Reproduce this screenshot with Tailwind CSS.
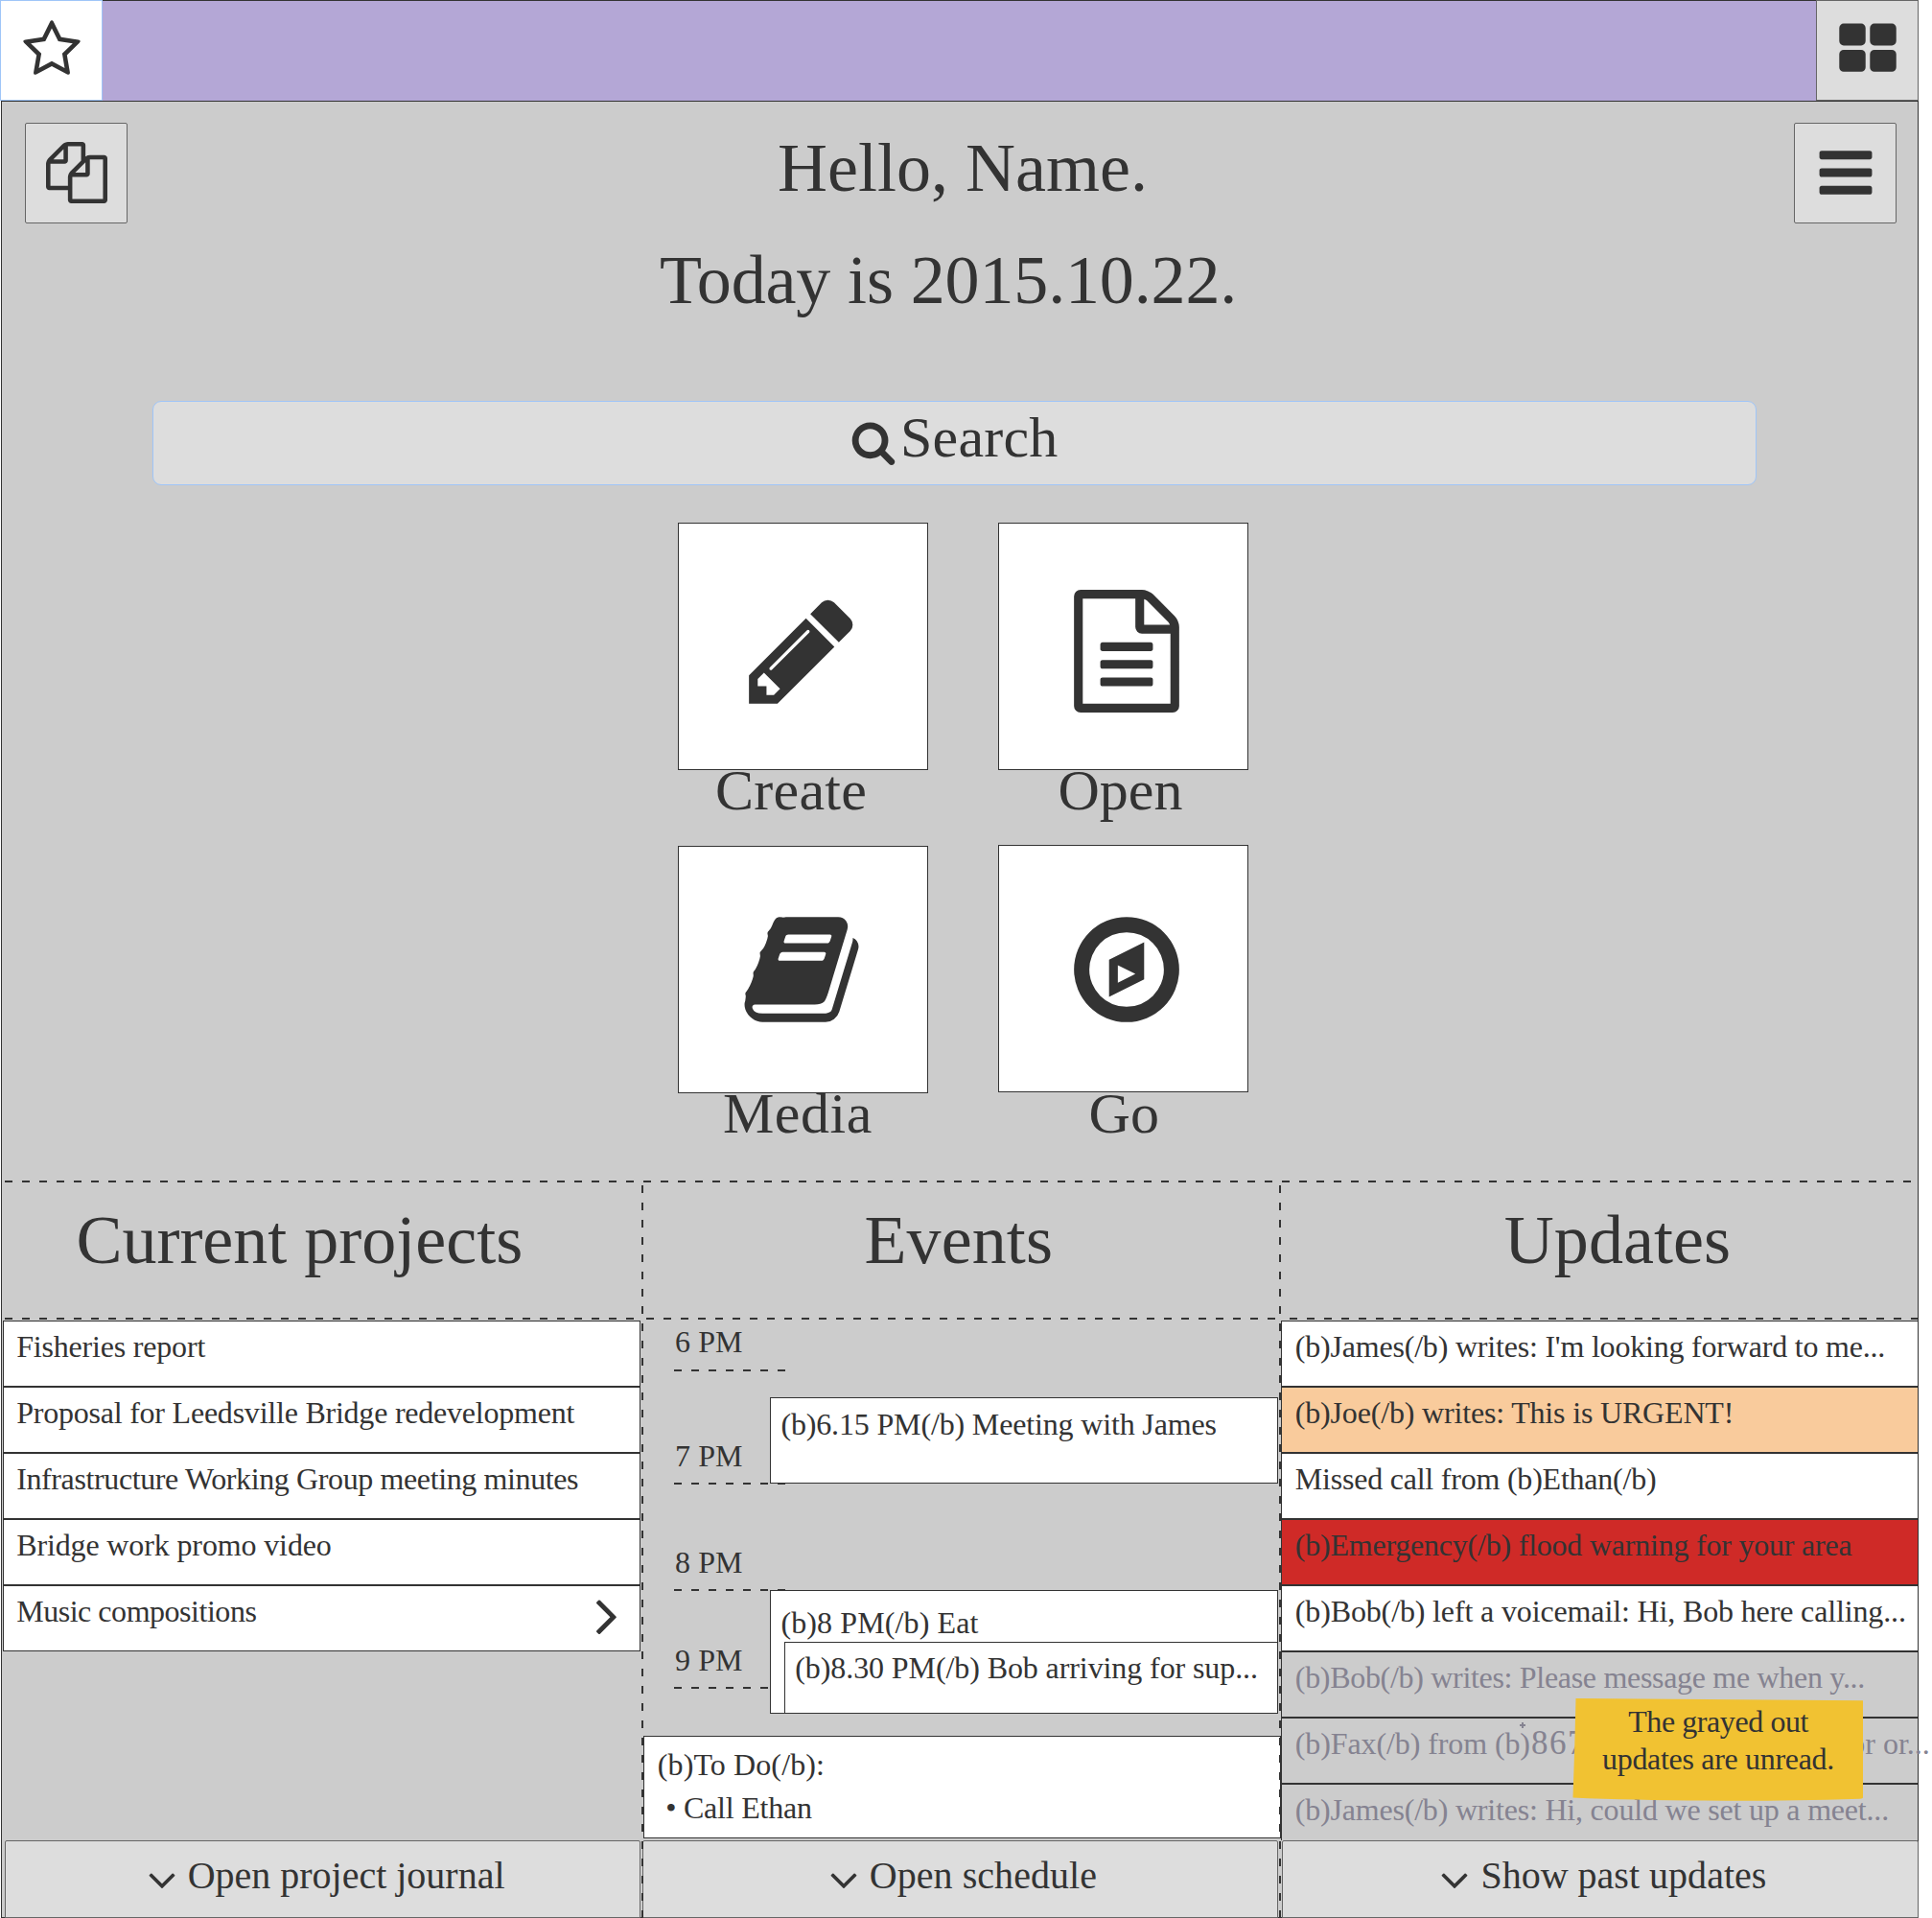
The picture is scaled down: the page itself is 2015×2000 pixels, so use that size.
<!DOCTYPE html>
<html lang="en">
<head>
<meta charset="utf-8">
<title>Home</title>
<script src="https://cdn.jsdelivr.net/npm/@tailwindcss/browser@4"></script>
</head>
<body class="w-[2015px] h-[2000px] overflow-hidden bg-white text-[#333333] font-['Liberation_Serif',serif] text-[32px] leading-[40px] whitespace-nowrap">

<!-- icon sprites -->
<svg class="hidden">
  <symbol id="angle-down" viewBox="0 0 1792 1792"><path d="M1395 736q0 13-10 23l-466 466q-10 10-23 10t-23-10l-466-466q-10-10-10-23t10-23l50-50q10-10 23-10t23 10l393 393 393-393q10-10 23-10t23 10l50 50q10 10 10 23z"/></symbol>
</svg>

<header class="flex w-[2001px] h-[105px]">
  <button class="flex w-[107px] h-[105px] border border-[#9fc5f8] bg-white">
    <svg class="ml-[21px] mt-[19.3px] size-16 shrink-0 fill-[#333333]" viewBox="0 0 1792 1792"><path d="M1201 1004l306-297-422-62-189-382-189 382-422 62 306 297-73 421 378-199 377 199zm527-357q0 22-26 48l-363 354 86 500q1 7 1 20 0 50-41 50-19 0-40-12l-449-236-449 236q-22 12-40 12-21 0-31.5-14.5t-10.5-35.5q0-6 2-20l86-500-364-354q-25-27-25-48 0-37 56-46l502-73 225-455q19-41 49-41t49 41l225 455 502 73q56 9 56 46z"/></svg>
  </button>
  <div class="flex-1 border-t border-[#333333] bg-[#b4a7d6]"></div>
  <button class="flex w-[107px] h-[105px] border border-[#666666] bg-[#dddddd]">
    <svg class="ml-[21px] mt-[19px] size-16 shrink-0 fill-[#333333]" viewBox="0 0 1792 1792"><path d="M832 1024v384q0 52-38 90t-90 38h-512q-52 0-90-38t-38-90v-384q0-52 38-90t90-38h512q52 0 90 38t38 90zm0-768v384q0 52-38 90t-90 38h-512q-52 0-90-38t-38-90v-384q0-52 38-90t90-38h512q52 0 90 38t38 90zm896 768v384q0 52-38 90t-90 38h-512q-52 0-90-38t-38-90v-384q0-52 38-90t90-38h512q52 0 90 38t38 90zm0-768v384q0 52-38 90t-90 38h-512q-52 0-90-38t-38-90v-384q0-52 38-90t90-38h512q52 0 90 38t38 90z"/></svg>
  </button>
</header>

<main class="ml-px w-[2000px] h-[1895px] border border-[#333333] bg-[#cccccc]">

  <!-- greeting -->
  <section class="flex h-[312px] pt-[22px] pl-[24px] pr-[22px] text-[72px] leading-[80px]">
    <button class="flex w-[107px] h-[105px] rounded-[2px] border border-[#666666] bg-[#dddddd]">
      <svg class="ml-[21px] mt-[19px] size-16 shrink-0 fill-[#333333]" viewBox="0 0 1792 1792"><path d="M1696 384q40 0 68 28t28 68v1216q0 40-28 68t-68 28h-960q-40 0-68-28t-28-68v-288h-544q-40 0-68-28t-28-68v-672q0-40 20-88t48-76l408-408q28-28 76-48t88-20h416q40 0 68 28t28 68v328q68-40 128-40h416zm-544 213l-299 299h299v-299zm-640-384l-299 299h299v-299zm196 647l316-316v-416h-384v416q0 40-28 68t-68 28h-416v640h512v-256q0-40 20-88t48-76zm956 804v-1152h-384v416q0 40-28 68t-68 28h-416v640h896z"/></svg>
    </button>
    <div class="flex-1 pt-[7px]">
      <h1 class="pl-[678px]">Hello, Name.</h1>
      <p class="mt-[37px] pl-[555px] tracking-[-0.139px]">Today is 2015.10.22.</p>
    </div>
    <button class="flex w-[107px] h-[105px] rounded-[2px] border border-[#666666] bg-[#dddddd]">
      <svg class="ml-[21px] mt-[19px] size-16 shrink-0 fill-[#333333]" viewBox="0 0 1792 1792"><path d="M1664 1344v128q0 26-19 45t-45 19h-1408q-26 0-45-19t-19-45v-128q0-26 19-45t45-19h1408q26 0 45 19t19 45zm0-512v128q0 26-19 45t-45 19h-1408q-26 0-45-19t-19-45v-128q0-26 19-45t45-19h1408q26 0 45 19t19 45zm0-512v128q0 26-19 45t-45 19h-1408q-26 0-45-19t-19-45v-128q0-26 19-45t45-19h1408q26 0 45 19t19 45z"/></svg>
    </button>
  </section>

  <!-- search -->
  <div class="ml-[157px] flex w-[1673px] h-[88px] rounded-[9px] border border-[#9fc5f8] bg-[#dddddd] text-[60px] leading-[60px]">
    <svg class="ml-[727px] mt-[18.3px] size-12 shrink-0 fill-[#333333]" viewBox="0 0 1792 1792"><path d="M1216 832q0-185-131.5-316.5t-316.5-131.5-316.5 131.5-131.5 316.5 131.5 316.5 316.5 131.5 316.5-131.5 131.5-316.5zm512 832q0 52-38 90t-90 38q-54 0-90-38l-343-342q-179 124-399 124-143 0-273.5-55.5t-225-150-150-225-55.5-273.5 55.5-273.5 150-225 225-150 273.5-55.5 273.5 55.5 225 150 150 225 55.5 273.5q0 220-124 399l343 343q37 37 37 90z"/></svg>
    <span class="ml-[4px] mt-[7px] tracking-[0.2px]">Search</span>
  </div>

  <!-- launch tiles -->
  <section class="mt-[39px] flex h-[686px] gap-[73px] pl-[705px] text-[60px] leading-[40px]">
    <div class="w-[261px]">
      <div class="flex h-[258px] border border-[#333333] bg-white">
        <svg class="ml-[63.5px] mt-[69px] size-32 shrink-0 fill-[#333333]" viewBox="0 0 1792 1792"><path d="M491 1536l91-91-235-235-91 91v107h128v128h107zm523-928q0-22-22-22-10 0-17 7l-542 542q-7 7-7 17 0 22 22 22 10 0 17-7l542-542q7-7 7-17zm-54-192l416 416-832 832h-416v-416zm683 96q0 53-37 90l-166 166-416-416 166-165q36-38 90-38 53 0 91 38l235 234q37 39 37 91z"/></svg>
      </div>
      <p class="h-10 pt-px pl-[39px] tracking-[0.25px]">Create</p>
      <div class="mt-[39px] flex h-[258px] border border-[#333333] bg-white">
        <svg class="ml-[64px] mt-[64px] size-32 shrink-0 fill-[#333333]" viewBox="0 0 1792 1792"><path d="M1703 478q40 57 18 129l-275 906q-19 64-76.500 107.500t-122.500 43.500h-923q-77 0-148.500-53.500t-99.500-131.500q-24-67-2-127 0-4 3-27t4-37q1-8-3-21.500t-3-19.500q2-11 8-21t16.500-23.500 16.500-23.500q23-38 45-91.500t30-91.500q3-10 .5-30t-.5-28q3-11 17-28t17-23q21-36 42-92t25-90q1-9-2.500-32t.5-28q4-13 22-30.500t22-22.500q19-26 42.500-84.500t27.500-96.500q1-8-3-25.500t-2-26.500q2-8 9-18t18-23 17-21q8-12 16.500-30.500t15-35 16-36 19.500-32 26.500-23.500 36-11.500 47.500 5.500l-1 3q38-9 51-9h761q74 0 114 56t18 130l-274 906q-36 119-71.500 153.500t-128.500 34.500h-869q-27 0-38 15-11 16-1 43 24 70 144 70h923q29 0 56-15.500t35-41.500l300-987q7-22 5-57 38 15 59 43zm-1064 2q-4 13 2 22.500t20 9.500h608q13 0 25.500-9.500t16.500-22.500l21-64q4-13-2-22.500t-20-9.500h-608q-13 0-25.500 9.500t-16.500 22.500zm-83 256q-4 13 2 22.500t20 9.500h608q13 0 25.500-9.500t16.500-22.500l21-64q4-13-2-22.500t-20-9.500h-608q-13 0-25.500 9.500t-16.500 22.500z"/></svg>
      </div>
      <p class="h-10 pt-px pl-[47px] tracking-[0.5px]">Media</p>
    </div>
    <div class="w-[261px]">
      <div class="flex h-[258px] border border-[#333333] bg-white">
        <svg class="ml-[68.700px] mt-[69px] size-32 shrink-0 fill-[#333333]" viewBox="0 0 1792 1792"><path d="M1596 380q28 28 48 76t20 88v1152q0 40-28 68t-68 28h-1344q-40 0-68-28t-28-68v-1600q0-40 28-68t68-28h896q40 0 88 20t76 48zm-444-244v376h376q-10-29-22-41l-313-313q-12-12-41-22zm384 1528v-1024h-416q-40 0-68-28t-28-68v-416h-768v1536h1280zm-1024-864q0-14 9-23t23-9h704q14 0 23 9t9 23v64q0 14-9 23t-23 9h-704q-14 0-23-9t-9-23v-64zm736 224q14 0 23 9t9 23v64q0 14-9 23t-23 9h-704q-14 0-23-9t-9-23v-64q0-14 9-23t23-9h704zm0 256q14 0 23 9t9 23v64q0 14-9 23t-23 9h-704q-14 0-23-9t-9-23v-64q0-14 9-23t23-9h704z"/></svg>
      </div>
      <p class="h-10 pt-px pl-[62.500px]">Open</p>
      <div class="mt-[38px] flex h-[258px] border border-[#333333] bg-white">
        <svg class="ml-[68.700px] mt-[65px] size-32 shrink-0 fill-[#333333]" viewBox="0 0 1792 1792" fill-rule="evenodd"><path d="M896 128a768 768 0 1 1 0 1536a768 768 0 1 1 0-1536zM896 352a544 544 0 1 0 0 1088a544 544 0 1 0 0-1088z"/><path d="M640 752L1152 496V1040L640 1296zM768 832V1088L1024 960z"/></svg>
      </div>
      <p class="h-10 pt-[2px] pl-[94.500px] tracking-[0.17px]">Go</p>
    </div>
  </section>

  <!-- dashboard -->
  <div class="ml-[3px] w-[1988px] h-[2px] bg-[repeating-linear-gradient(90deg,#333333_0_8px,transparent_8px_18px)]"></div>
  <section class="flex h-[767px]">

    <!-- current projects -->
    <div class="w-[667px] shrink-0">
      <h2 class="h-[141px] pt-[20px] pl-[77.400px] text-[72px] leading-[80px]">Current projects</h2>
      <div class="ml-[3px] w-[656px] h-[2px] bg-[repeating-linear-gradient(90deg,#333333_0_8px,transparent_8px_18px)]"></div>
      <ul class="mt-px ml-px h-[542px] w-[665px]">
        <li class="h-[69px] border border-[#333333] bg-white pt-[6px] pl-[13.200px] tracking-[-0.19px]">Fisheries report</li>
        <li class="h-[69px] border border-[#333333] bg-white pt-[6px] pl-[13.200px] tracking-[-0.225px]">Proposal for Leedsville Bridge redevelopment</li>
        <li class="h-[69px] border border-[#333333] bg-white pt-[6px] pl-[13.200px] tracking-[-0.385px]">Infrastructure Working Group meeting minutes</li>
        <li class="h-[69px] border border-[#333333] bg-white pt-[6px] pl-[13.200px] tracking-[-0.13px]">Bridge work promo video</li>
        <li class="flex h-[69px] justify-between border border-[#333333] bg-white pt-[6px] pl-[13.200px] tracking-[-0.47px]">Music compositions
          <svg class="-mt-[8px] mr-[2px] size-16 fill-[#333333]" viewBox="0 0 1792 1792"><path d="M1171 960q0 13-10 23l-466 466q-10 10-23 10t-23-10l-50-50q-10-10-10-23t10-23l393-393-393-393q-10-10-10-23t10-23l50-50q10-10 23-10t23 10l466 466q10 10 10 23z"/></svg>
        </li>
      </ul>
      <button class="ml-[3px] flex h-[81px] w-[663px] rounded-t-[2px] border border-[#666666] bg-[#dddddd] text-[40px] leading-[80px]">
        <svg class="ml-[139px] mt-[16px] size-12 fill-[#333333]"><use href="#angle-down"/></svg>
        <span class="-mt-[4px] ml-[2.700px] tracking-[-0.01px]">Open project journal</span>
      </button>
    </div>

    <div class="relative z-10 mt-[3px] h-[764px] w-[2px] shrink-0 bg-[repeating-linear-gradient(180deg,#333333_0_8px,transparent_8px_18px)]"></div>

    <!-- events -->
    <div class="w-[663px] shrink-0">
      <h2 class="h-[141px] pt-[20px] pl-[230.500px] text-[72px] leading-[80px] tracking-[0.1px]">Events</h2>
      <div class="ml-[3px] w-[656px] h-[2px] bg-[repeating-linear-gradient(90deg,#333333_0_8px,transparent_8px_18px)]"></div>
      <div class="relative h-[434px] pt-[3px] pl-[32px]">
        <div class="flex h-[119px] w-[116px] flex-col"><span class="pl-px tracking-[0.1px]">6 PM</span><i class="mt-[9px] block h-[2px] bg-[repeating-linear-gradient(90deg,#333333_0_8px,transparent_8px_18px)]"></i></div>
        <div class="flex h-[111px] w-[116px] flex-col"><span class="pl-px tracking-[0.1px]">7 PM</span><i class="mt-[8px] block h-[2px] bg-[repeating-linear-gradient(90deg,#333333_0_8px,transparent_8px_18px)]"></i></div>
        <div class="flex h-[102px] w-[116px] flex-col"><span class="pl-px tracking-[0.1px]">8 PM</span><i class="mt-[8px] block h-[2px] bg-[repeating-linear-gradient(90deg,#333333_0_8px,transparent_8px_18px)]"></i></div>
        <div class="flex w-[116px] flex-col"><span class="pl-px tracking-[0.1px]">9 PM</span><i class="mt-[8px] block h-[2px] bg-[repeating-linear-gradient(90deg,#333333_0_8px,transparent_8px_18px)]"></i></div>
        <!-- calendar entries placed by time -->
        <div class="absolute top-[81px] left-[132px] h-[90px] w-[530px] border border-[#333333] bg-white pt-[7px] pl-[10.400px] tracking-[-0.155px]">(b)6.15 PM(/b) Meeting with James</div>
        <div class="absolute top-[282px] left-[132px] h-[129px] w-[530px] border border-[#333333] bg-white pt-[13px] pl-[10.400px] tracking-[0.12px]">(b)8 PM(/b) Eat</div>
        <div class="absolute top-[336px] left-[147px] h-[75px] w-[515px] border border-[#333333] bg-white pt-[6px] pl-[10.300px] tracking-[-0.094px]">(b)8.30 PM(/b) Bob arriving for sup...</div>
      </div>
      <div class="h-[107px] w-[665px] border border-[#333333] bg-white pt-[9px] pl-[13.800px]">
        <p class="h-[45px] tracking-[0.105px]">(b)To Do(/b):</p>
        <p class="pl-[8.400px] tracking-[-0.216px]">• Call Ethan</p>
      </div>
      <button class="mt-[2px] -ml-px flex h-[81px] w-[663px] rounded-t-[2px] border border-[#666666] bg-[#dddddd] text-[40px] leading-[80px]">
        <svg class="ml-[185.200px] mt-[16px] size-12 fill-[#333333]"><use href="#angle-down"/></svg>
        <span class="-mt-[4px] ml-[2.500px] tracking-[0.06px]">Open schedule</span>
      </button>
    </div>

    <div class="relative z-10 mt-[3px] h-[764px] w-[2px] shrink-0 bg-[repeating-linear-gradient(180deg,#333333_0_8px,transparent_8px_18px)]"></div>

    <!-- updates -->
    <div class="relative w-[665px] shrink-0">
      <h2 class="h-[141px] pt-[20px] pl-[232.800px] text-[72px] leading-[80px] tracking-[0.06px]">Updates</h2>
      <div class="ml-[9px] w-[656px] h-[2px] bg-[repeating-linear-gradient(90deg,#333333_0_8px,transparent_8px_18px)]"></div>
      <ul class="mt-px h-[542px]">
        <li class="h-[69px] border border-[#333333] bg-white pt-[6px] pl-[13.800px] tracking-[-0.2px]">(b)James(/b) writes: I'm looking forward to me...</li>
        <li class="h-[69px] border border-[#333333] bg-[#f9cb9c] pt-[6px] pl-[13.800px] tracking-[-0.175px]">(b)Joe(/b) writes: This is URGENT!</li>
        <li class="h-[69px] border border-[#333333] bg-white pt-[6px] pl-[13.800px] tracking-[-0.219px]">Missed call from (b)Ethan(/b)</li>
        <li class="h-[69px] border border-[#333333] bg-[#cf2a27] pt-[6px] pl-[13.800px] tracking-[-0.22px]">(b)Emergency(/b) flood warning for your area</li>
        <li class="h-[69px] border border-[#333333] bg-white pt-[6px] pl-[13.800px] tracking-[-0.14px]">(b)Bob(/b) left a voicemail: Hi, Bob here calling...</li>
        <li class="h-[69px] border border-[#333333] pt-[6px] pl-[13.800px] tracking-[-0.31px] text-[#858391]">(b)Bob(/b) writes: Please message me when y...</li>
        <li class="h-[69px] border border-[#333333] pt-[6px] pl-[13.800px] text-[#858391]">
          <div class="flex w-[662px]">
            <span class="tracking-[-0.1px]">(b)Fax(/b) from (b)</span>
            <span class="ml-px text-[35px] tracking-[1.5px]">867</span>
            <span class="ml-auto">for or...</span>
          </div>
        </li>
        <li class="h-[59px] border border-b-0 border-[#333333] pt-[6px] pl-[13.800px] tracking-[-0.2px] text-[#858391]">(b)James(/b) writes: Hi, could we set up a meet...</li>
      </ul>
      <button class="ml-px flex h-[81px] w-[664px] rounded-t-[2px] border border-[#666666] bg-[#dddddd] text-[40px] leading-[80px]">
        <svg class="ml-[155.400px] mt-[16px] size-12 fill-[#333333]"><use href="#angle-down"/></svg>
        <span class="-mt-[4px] ml-[3px] tracking-[0.013px]">Show past updates</span>
      </button>

      <!-- insertion marker -->
      <svg class="absolute top-[563px] left-[249px] size-[6px] fill-[#858391]" viewBox="0 0 6 6"><path d="M2 0h2v2h2v2H4v2H2V4H0V2h2z"/></svg>

      <!-- sticky note -->
      <div class="absolute top-[538px] left-[304px] h-[107px] w-[304px]">
        <svg class="absolute inset-0 fill-[#f1c232]" width="304" height="108" viewBox="0 0 304 108"><path d="M3.500 0L303 2.300V103.500Q303 104.500 300 104.700Q220 107 160 106.700Q70 106.500 .5 103.500Q2.500 50 3.500 0z"/></svg>
        <div class="relative pt-[5px] leading-[39px]">
          <p class="pl-[58.200px] tracking-[-0.42px]">The grayed out</p>
          <p class="pl-[31px] tracking-[-0.31px]">updates are unread.</p>
        </div>
      </div>
    </div>
  </section>
</main>
</body>
</html>
